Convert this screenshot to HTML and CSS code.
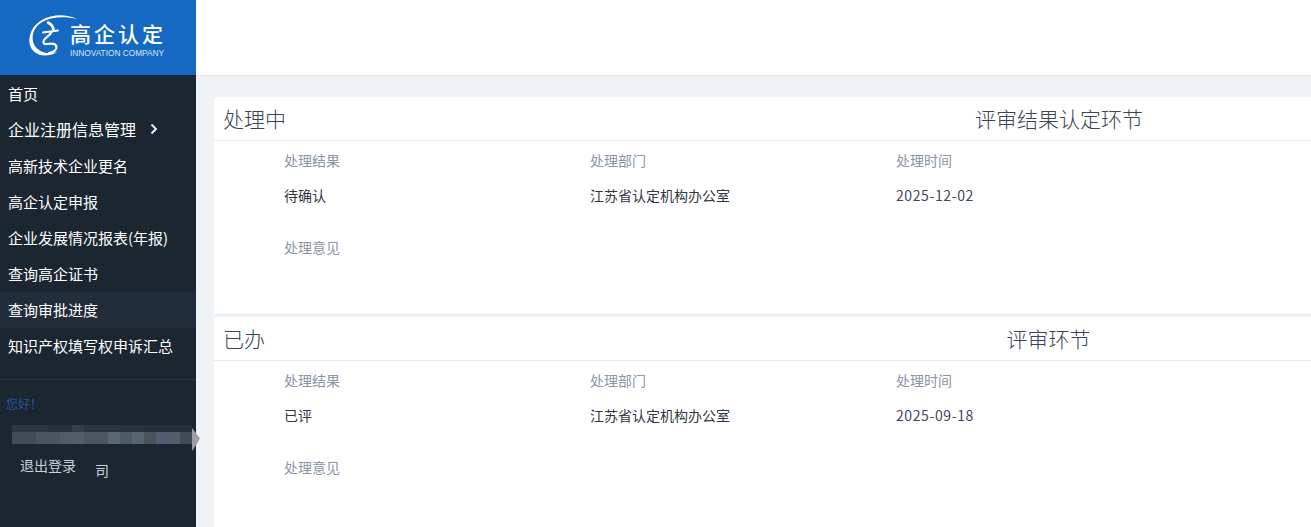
FILE: index.html
```html
<!DOCTYPE html>
<html lang="zh-CN">
<head>
<meta charset="utf-8">
<title>高企认定</title>
<link rel="stylesheet" href="styles.css">
</head>
<body>
<div class="app">
  <aside class="sidebar">
    <div class="logo">
      <svg class="logo-mark" viewBox="0 0 52 46" width="52" height="46" fill="none">
        <path d="M49 5C38 0 25 0 14 6C5 11 .5 20 1.500 29C2.500 37 10 42 18 41.500C23 41.200 27 39.500 30 37.500C25 39.500 18 40 12.500 37C6 33.500 3.500 27 5 20C7 12 14 6.500 23 4.500C32 2.500 41 3 49 5Z" fill="#fff"/>
        <path d="M20 8.500C23 10 25 12.500 25.500 15.500" stroke="#fff" stroke-width="2.600" stroke-linecap="round"/>
        <path d="M15 18.500L30 16.500" stroke="#fff" stroke-width="2" stroke-linecap="round"/>
        <path d="M23.500 18C22 21.500 18 23 16 26C14.500 29 16 30.500 19 30C24 29 28 29.500 28.500 33C29 36 25 38.500 21 39" stroke="#fff" stroke-width="2.200" stroke-linecap="round"/>
      </svg>
      <div class="logo-text">
        <div class="logo-cn">高企认定</div>
        <div class="logo-en">INNOVATION COMPANY</div>
      </div>
    </div>
    <nav class="nav">
      <a class="nav-item">首页</a>
      <a class="nav-item nav-wide">企业注册信息管理
        <svg class="chevron" viewBox="0 0 8 12" width="8" height="12" fill="none"><path d="M1.500 1.500L6 6L1.500 10.500" stroke="#fff" stroke-width="1.800"/></svg>
      </a>
      <a class="nav-item">高新技术企业更名</a>
      <a class="nav-item">高企认定申报</a>
      <a class="nav-item">企业发展情况报表(年报)</a>
      <a class="nav-item">查询高企证书</a>
      <a class="nav-item active">查询审批进度</a>
      <a class="nav-item">知识产权填写权申诉汇总</a>
    </nav>
    <div class="user">
      <div class="hello">您好！</div>
      <div class="mosaic"></div>
      <div class="user-row">
        <span class="logout">退出登录</span>
        <span class="tail">司</span>
      </div>
    </div>
    <span class="mosaic-end"></span>
  </aside>
  <div class="main">
    <header class="topbar"></header>
    <div class="content">
      <section class="card">
        <div class="card-head">
          <span class="card-title">处理中</span>
          <span class="card-stage">评审结果认定环节</span>
        </div>
        <div class="card-body">
          <div class="fields">
            <div class="label">处理结果</div>
            <div class="label">处理部门</div>
            <div class="label">处理时间</div>
            <div class="value">待确认</div>
            <div class="value">江苏省认定机构办公室</div>
            <div class="value date">2025-12-02</div>
          </div>
          <div class="label opinion">处理意见</div>
        </div>
      </section>
      <section class="card">
        <div class="card-head">
          <span class="card-title">已办</span>
          <span class="card-stage">评审环节</span>
        </div>
        <div class="card-body">
          <div class="fields">
            <div class="label">处理结果</div>
            <div class="label">处理部门</div>
            <div class="label">处理时间</div>
            <div class="value">已评</div>
            <div class="value">江苏省认定机构办公室</div>
            <div class="value date">2025-09-18</div>
          </div>
          <div class="label opinion">处理意见</div>
        </div>
      </section>
    </div>
  </div>
</div>
</body>
</html>
```
FILE: styles.css
```css
* { box-sizing: border-box; }
html, body { margin: 0; height: 100%; overflow: hidden; }
body {
  font-family: "Noto Sans CJK SC", "Liberation Sans", sans-serif;
  font-size: 14px;
  background: #eff3f6;
}
.app { display: flex; width: 1311px; height: 527px; overflow: hidden; }

.sidebar {
  position: relative;
  flex: 0 0 196px;
  background: #1b2631;
  color: #fff;
}
.logo {
  height: 75px;
  background: #1569c2;
  display: flex;
  align-items: flex-start;
  padding: 14px 0 0 28px;
}
.logo-mark { flex: none; }
.logo-text { margin-left: -10px; padding-top: 6px; }
.logo-cn {
  font-size: 21px;
  font-weight: 500;
  line-height: 26px;
  letter-spacing: 3px;
  white-space: nowrap;
}
.logo-en {
  font-family: "Liberation Sans", sans-serif;
  font-size: 8.300px;
  line-height: 10px;
  margin-top: 2px;
  white-space: nowrap;
  color: #dbe8f6;
}

.nav {
  margin-top: 1px;
  padding-bottom: 15px;
  border-bottom: 1px solid #2c3541;
}
.nav-item {
  display: flex;
  align-items: center;
  height: 36px;
  padding: 0 0 2px 8px;
  font-size: 15px;
  color: #fff;
  white-space: nowrap;
}
.nav-wide { font-size: 16px; }
.nav-item.active { background: #212d3b; }
.chevron { margin-left: 14px; }

.user { padding-left: 6px; }
.hello {
  margin-top: 16px;
  font-size: 12px;
  line-height: 16px;
  color: #23579f;
}
.mosaic {
  width: 180px;
  height: 19px;
  margin: 13px 0 0 6px;
  background:
    linear-gradient(90deg,
      #414c56 0 24px, #4a5560 24px 48px, #525a66 48px 60px, #525e6a 60px 72px,
      #4b5661 72px 96px, #5a6672 96px 108px, #4d5a62 108px 120px, #586470 120px 132px,
      #47535c 132px 144px, #555c70 144px 156px, #525e68 156px 168px, #3f4a54 168px 180px)
      0 7px / 180px 12px no-repeat,
    linear-gradient(90deg,
      #2e3843 0 36px, #27323c 36px 60px, #333d47 60px 72px, #2a343e 72px 108px,
      #29333d 108px 132px, #262f39 132px 180px)
      0 0 / 180px 7px no-repeat;
}
.mosaic-end {
  position: absolute;
  left: 192px;
  top: 428px;
  width: 8px;
  height: 23px;
  background: #9aa0a8;
  clip-path: polygon(0 0, 100% 45%, 60% 70%, 0 100%);
}
.user-row { display: flex; align-items: flex-start; padding-left: 14px; margin-top: 11px; }
.logout { font-size: 14px; line-height: 20px; color: #c9d1da; }
.tail { margin: 5px 0 0 19px; font-size: 14px; line-height: 20px; color: #c9d1da; }

.main { flex: 1; min-width: 0; }
.topbar {
  height: 76px;
  background: #fff;
  border-bottom: 1px solid #e2e7eb;
}
.content { padding: 21px 0 0 18px; }
.card {
  width: 1618px;
  height: 218px;
  margin-bottom: 2px;
  background: #fff;
  border-radius: 3px 0 0 3px;
  border-bottom: 1px solid #e6eaee;
}
.card-head {
  display: flex;
  height: 44px;
  padding: 0 0 2px 9px;
  align-items: center;
  border-bottom: 1px solid #e6eaee;
}
.card-title, .card-stage {
  font-size: 21px;
  line-height: 40px;
  font-weight: 300;
  color: #3a4452;
  white-space: nowrap;
}
.card-stage { flex: 1; text-align: center; }
.card-body { padding: 9px 0 0 70px; }
.fields {
  display: grid;
  grid-template-columns: repeat(3, 306px);
  grid-template-rows: 20px 20px;
  row-gap: 15px;
}
.label { font-size: 14px; line-height: 20px; color: #8b95a5; }
.value { font-size: 14px; line-height: 20px; color: #2f3640; }
.value.date { color: #3f4a59; letter-spacing: .6px; }
.opinion { margin-top: 32px; }
```
